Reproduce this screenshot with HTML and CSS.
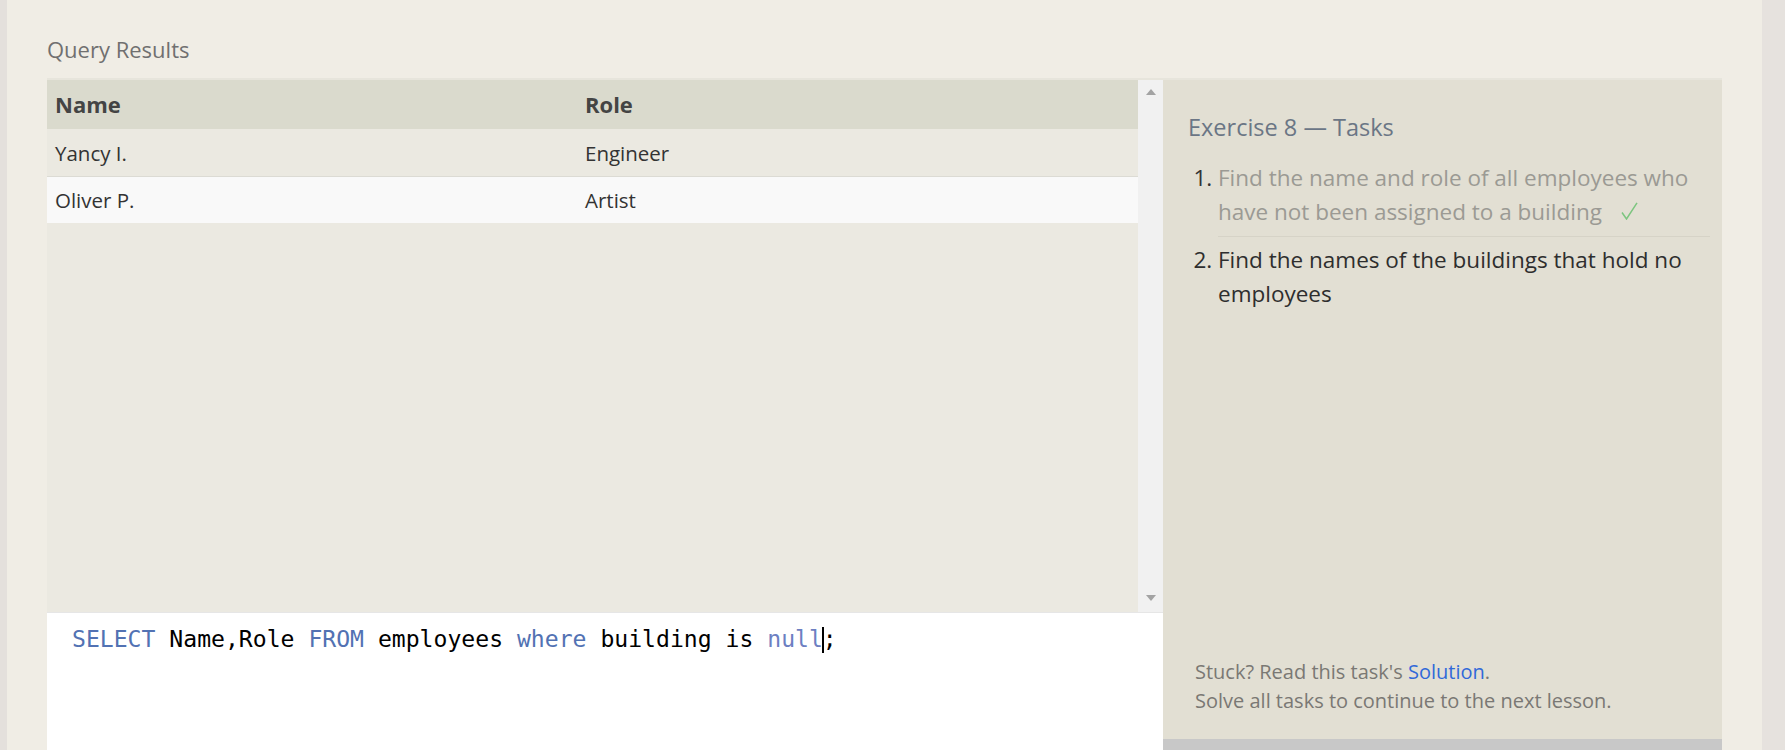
FILE: index.html
```html
<!DOCTYPE html>
<html lang="en">
<head>
<meta charset="utf-8">
<title>Query Results</title>
<link rel="stylesheet" href="styles.css">
</head>
<body>
<div class="page">
  <div class="edge-left"></div>
  <main class="main">
    <h2 class="section-title">Query Results</h2>
    <div class="workspace">
      <div class="left-col">
        <div class="results">
          <div class="table-wrap">
            <table class="results-table">
              <colgroup><col class="col-name"><col class="col-role"></colgroup>
              <thead>
                <tr><th>Name</th><th>Role</th></tr>
              </thead>
              <tbody>
                <tr class="row-a"><td>Yancy I.</td><td>Engineer</td></tr>
                <tr class="row-b"><td>Oliver P.</td><td>Artist</td></tr>
              </tbody>
            </table>
          </div>
          <div class="scrollbar">
            <span class="arrow-up"></span>
            <span class="arrow-down"></span>
          </div>
        </div>
        <div class="editor">
          <pre class="code"><span class="kw">SELECT</span> Name,Role <span class="kw">FROM</span> employees <span class="kw">where</span> building is <span class="atom">null</span><span class="cursor"></span>;</pre>
        </div>
      </div>
      <aside class="tasks-col">
        <div class="tasks">
          <h3 class="tasks-title">Exercise 8 — Tasks</h3>
          <ol class="task-list">
            <li class="task done"><span class="task-text">Find the name and role of all employees who have not been assigned to a building</span><svg class="check" width="17" height="18" viewBox="0 0 17 18"><polyline points="1,10.5 5.5,17 16,0.8" fill="none" stroke="#7cc57f" stroke-width="1.5"/></svg></li>
            <li class="task">Find the names of the buildings that hold no employees</li>
          </ol>
          <div class="help">
            <p>Stuck? Read this task's <a class="link" href="#">Solution</a>.</p>
            <p>Solve all tasks to continue to the next lesson.</p>
          </div>
        </div>
        <div class="next-bar"></div>
      </aside>
    </div>
  </main>
  <div class="edge-right"></div>
</div>
</body>
</html>
```

FILE: styles.css
```css
html, body {
  margin: 0;
  padding: 0;
  height: 100%;
  overflow: hidden;
}

body {
  background: #f0ede5;
  font-family: "Open Sans", "Noto Sans", sans-serif;
  color: #333;
}

.page {
  display: flex;
  height: 750px;
}

.edge-left {
  width: 7px;
  flex: none;
  background: #e4e0dc;
}

.edge-right {
  width: 23px;
  flex: none;
  background: #e6e2de;
}

.main {
  flex: 1;
  padding: 0 40px;
  min-width: 0;
  display: flex;
  flex-direction: column;
}

.section-title {
  margin: 33.5px 0 14.5px;
  font-size: 22px;
  line-height: 30px;
  font-weight: 400;
  color: #707070;
}

.workspace {
  flex: 1;
  min-height: 0;
  display: flex;
  border-top: 2px solid #e7e5dc;
}

.left-col {
  width: 1116px;
  flex: none;
  display: flex;
  flex-direction: column;
}

.results {
  display: flex;
  height: 532px;
  flex: none;
  background: #ebe9e1;
}

.table-wrap {
  flex: 1;
}

.results-table {
  width: 100%;
  border-collapse: collapse;
  table-layout: fixed;
}

.col-name {
  width: 530px;
}

.results-table th {
  text-align: left;
  background: #dadacd;
  font-size: 22px;
  font-weight: 700;
  line-height: 49px;
  padding: 0 0 0 8px;
  color: #444;
}

.results-table td {
  font-size: 20.5px;
  line-height: 46px;
  padding: 1px 0 0 8px;
  color: #333;
}

.row-a td {
  background: #ebe9e1;
  border-bottom: 1px solid #dcdbd4;
}

.row-b td {
  background: #f9f9f9;
  padding-top: 0;
}

.scrollbar {
  width: 25px;
  flex: none;
  background: #f1f1f1;
  display: flex;
  flex-direction: column;
  justify-content: space-between;
  align-items: center;
  padding: 9px 0 11px;
  box-sizing: border-box;
}

.arrow-up {
  width: 0;
  height: 0;
  border-left: 5.5px solid transparent;
  border-right: 5.5px solid transparent;
  border-bottom: 6px solid #a3a3a3;
}

.arrow-down {
  width: 0;
  height: 0;
  border-left: 5.5px solid transparent;
  border-right: 5.5px solid transparent;
  border-top: 6px solid #a3a3a3;
}

.editor {
  flex: 1;
  min-height: 0;
  background: #ffffff;
  border-top: 1px solid #e6e6e6;
}

.code {
  margin: 0;
  padding: 11px 25px;
  font-family: "DejaVu Sans Mono", "Liberation Mono", monospace;
  font-size: 23.1px;
  line-height: 30px;
  color: #000;
}

.kw {
  color: #5272b3;
}

.atom {
  color: #6d7fc2;
}

.cursor {
  display: inline-block;
  width: 0;
  height: 26px;
  border-left: 2px solid #000;
  margin: 0 -1px;
  vertical-align: -6px;
}

.tasks-col {
  flex: 1;
  display: flex;
  flex-direction: column;
}

.tasks {
  height: 659px;
  flex: none;
  background: #e2dfd3;
  display: flex;
  flex-direction: column;
  padding: 31px 12px 0 25px;
  box-sizing: border-box;
}

.tasks-title {
  margin: 0 0 12px;
  font-size: 23.5px;
  line-height: 32px;
  font-weight: 400;
  color: #6b7685;
}

.task-list {
  margin: 0;
  padding: 0 0 0 30px;
  font-size: 22.5px;
  line-height: 34.3px;
  color: #2e2e2e;
}

.task {
  padding: 6px 0;
}

.task.done {
  border-bottom: 1px solid #d6d3c7;
  color: #333;
}

.task-text {
  color: #9b9a94;
}

.check {
  margin-left: 19px;
}

.help {
  margin-top: auto;
  padding: 0 0 23.8px 7px;
  font-size: 20px;
  line-height: 29.3px;
  color: #7a7874;
}

.help p {
  margin: 0;
}

.link {
  color: #3169d9;
  text-decoration: none;
}

.next-bar {
  flex: 1;
  background: #c8c8c8;
}
```
